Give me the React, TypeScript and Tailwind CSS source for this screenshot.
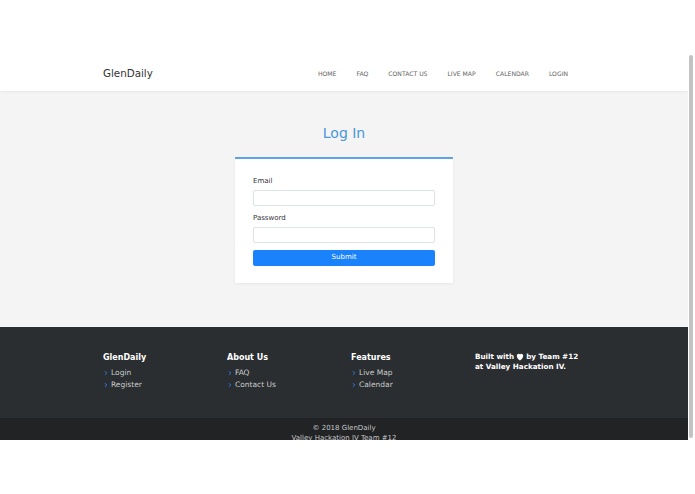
import { ChevronRight } from "lucide-react";

const font = { fontFamily: '"DejaVu Sans", "Open Sans", sans-serif' };

const navItems = ["HOME", "FAQ", "CONTACT US", "LIVE MAP", "CALENDAR", "LOGIN"];

const footerCols = [
  { title: "GlenDaily", links: ["Login", "Register"] },
  { title: "About Us", links: ["FAQ", "Contact Us"] },
  { title: "Features", links: ["Live Map", "Calendar"] },
];

function FooterLink({ label }: { label: string }) {
  return (
    <li className="flex items-center gap-[2px] text-[7.5px] leading-[12px] text-[#c9cbcd]">
      <ChevronRight className="size-[6px] text-[#2b7de9]" strokeWidth={4} />
      {label}
    </li>
  );
}

export default function App() {
  return (
    <div className="h-[494px] w-[695px] overflow-hidden bg-white" style={font}>
      <div className="h-[52px]" />
      <div className="flex">
        {/* page frame */}
        <div className="h-[388px] w-[688px] overflow-hidden bg-[#f4f4f4]">
          {/* header */}
          <header className="relative z-10 h-[39px] bg-white pt-[4px] shadow-[0_1px_3px_rgba(0,0,0,0.06)]">
            <div className="mx-auto flex h-full w-[482px] items-center justify-between">
              <span className="text-[10.3px] text-[#333]">GlenDaily</span>
              <nav className="flex gap-[20px] pr-[17px]">
                {navItems.map((n) => (
                  <span key={n} className="text-[6.1px] text-[#666]">
                    {n}
                  </span>
                ))}
              </nav>
            </div>
          </header>

          {/* body */}
          <main className="flex h-[236px] flex-col items-center pt-[32px]">
            <h1 className="text-[14px] leading-[20px] text-[#4a97dc]">Log In</h1>
            <div className="mt-[14px] w-[218px] bg-white shadow-[0_1px_3px_rgba(0,0,0,0.06)]">
              <div className="h-[1.5px] bg-[#5fa3ea]" />
              <div className="px-[18px] pb-[17px] pt-[17px]">
                <label className="block text-[7px] leading-[10px] text-[#333]">Email</label>
                <div className="mt-[4px] h-[16px] rounded-[2px] border border-[#dfe2e6] bg-white" />
                <label className="mt-[7px] block text-[7px] leading-[10px] text-[#333]">Password</label>
                <div className="mt-[4px] h-[16px] rounded-[2px] border border-[#dfe2e6] bg-white" />
                <button className="mt-[7px] flex h-[16px] w-full items-center justify-center rounded-[2px] bg-[#1a82fb] text-[7px] text-white">
                  Submit
                </button>
              </div>
            </div>
          </main>

          {/* footer */}
          <footer className="bg-[#2b2e31]">
            <div className="mx-auto grid h-[91px] w-[482px] grid-cols-[124px_124px_124px_1fr] pt-[25px]">
              {footerCols.map((c) => (
                <div key={c.title}>
                  <h4 className="text-[8px] font-bold leading-[12px] text-white">{c.title}</h4>
                  <ul className="mt-[3px]">
                    {c.links.map((l) => (
                      <FooterLink key={l} label={l} />
                    ))}
                  </ul>
                </div>
              ))}
              <div className="text-[7.2px] font-bold leading-[10px] text-white">
                <p className="flex items-center gap-[2px]">
                  Built with
                  <svg viewBox="2 3 20 19" className="size-[8px] shrink-0" fill="currentColor">
                    <path d="M12 21s-8-5.3-8-11.2C4 6.6 6.4 4.5 9 4.5c1.4 0 2.4.6 3 1.5.6-.9 1.6-1.5 3-1.5 2.6 0 5 2.1 5 5.3C20 15.7 12 21 12 21z" />
                  </svg>
                  by Team #12
                </p>
                <p>at Valley Hackation IV.</p>
              </div>
            </div>
            <div className="flex h-[22px] flex-col items-center bg-[#222324] pt-[5px] text-[7px] leading-[10px] text-[#c4c6c8]">
              <span>© 2018 GlenDaily</span>
              <span>Valley Hackation IV Team #12</span>
            </div>
          </footer>
        </div>
        {/* scrollbar */}
        <div className="ml-[1px] mt-[3px] h-[383px] w-[4px] rounded-full bg-[#c3c3c3]" />
      </div>
    </div>
  );
}
